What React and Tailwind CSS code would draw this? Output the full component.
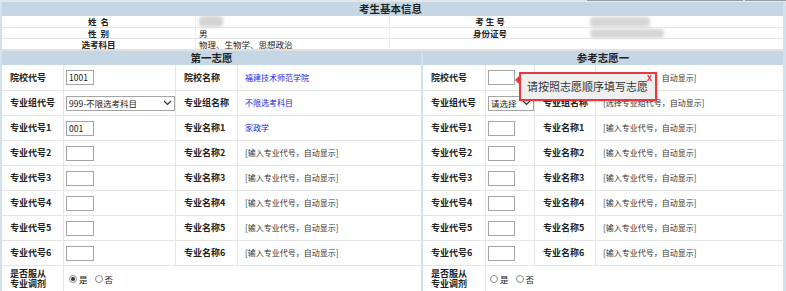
import React from 'react';

const font = { fontFamily: '"Noto Sans CJK SC", "Noto Sans", sans-serif' };

function Chevron() {
    return (
        <svg width="9" height="6" viewBox="0 0 9 6" className="shrink-0">
            <path d="M1 1 L4.5 4.5 L8 1" fill="none" stroke="#333" strokeWidth="1.2" />
        </svg>
    );
}

function Box({ value, wide }) {
    return (
        <div className={`h-[15px] border border-[#a5a5a5] bg-white text-[8.5px] leading-[13px] px-[2px] text-[#222] ${wide ? 'w-[28px]' : 'w-[27px]'}`}>
            {value}
        </div>
    );
}

function Radio({ checked, label }) {
    return (
        <span className="flex items-center gap-[2px]">
            <span className="w-[8px] h-[8px] rounded-full border border-[#8a8a8a] bg-white flex items-center justify-center">
                {checked && <span className="w-[4px] h-[4px] rounded-full bg-[#333]"></span>}
            </span>
            <span className="text-[8.5px] text-[#222]">{label}</span>
        </span>
    );
}

const rowCls = 'h-[25px] border-b border-[#e4e4e4] flex items-center';

function Panel({ title, cols, first, padL, selW }) {
    const rows = [
        { l: '专业代号1', n: '专业名称1' },
        { l: '专业代号2', n: '专业名称2' },
        { l: '专业代号3', n: '专业名称3' },
        { l: '专业代号4', n: '专业名称4' },
        { l: '专业代号5', n: '专业名称5' },
        { l: '专业代号6', n: '专业名称6' },
    ];
    const label = `${rowCls} border-r border-r-[#e4e4e4] ${padL} text-[9px] font-bold text-[#222] whitespace-nowrap`;
    const inputCell = `${rowCls} border-r border-r-[#e4e4e4] pl-[2px]`;
    const valueCell = `${rowCls} pl-[7px] text-[8px] whitespace-nowrap`;
    const hint = '[输入专业代号，自动显示]';
    return (
        <div className="flex flex-col">
            <div className="h-[14px] bg-[#c5d7e5] text-center text-[10.5px] font-bold leading-[14px] text-[#222]">{title}</div>
            <div className={`grid ${cols}`}>
                <div className={label + ' h-[26px]'}>院校代号</div>
                <div className={inputCell + ' h-[26px]'}><Box value={first ? '1001' : ''} wide={first} /></div>
                <div className={label + ' h-[26px]'}>院校名称</div>
                <div className={valueCell + ' h-[26px]'}>
                    {first ? <span className="text-[#2323e6]">福建技术师范学院</span> : <span className="text-[#333]">[输入院校代号，自动显示]</span>}
                </div>

                <div className={label}>专业组代号</div>
                <div className={inputCell}>
                    <div className={`h-[15px] ${selW} border border-[#a5a5a5] bg-white flex items-center justify-between pl-[2px] pr-[2px] text-[8.5px] text-[#222] whitespace-nowrap`}>
                        <span>{first ? '999-不限选考科目' : '请选择'}</span>
                        <Chevron />
                    </div>
                </div>
                <div className={label}>专业组名称</div>
                <div className={valueCell}>
                    {first ? <span className="text-[#2323e6]">不限选考科目</span> : <span className="text-[#333]">[选择专业组代号，自动显示]</span>}
                </div>

                {rows.map((r, i) => (
                    <React.Fragment key={r.l}>
                        <div className={label}>{r.l}</div>
                        <div className={inputCell}><Box value={first && i === 0 ? '001' : ''} wide={first} /></div>
                        <div className={label}>{r.n}</div>
                        <div className={valueCell}>
                            {first && i === 0 ? <span className="text-[#2323e6]">家政学</span> : <span className="text-[#333]">{hint}</span>}
                        </div>
                    </React.Fragment>
                ))}

                <div className={`h-[26px] flex flex-col justify-center border-r border-r-[#e4e4e4] ${padL} text-[9px] font-bold leading-[10px] text-[#222]`}>
                    <span>是否服从</span>
                    <span>专业调剂</span>
                </div>
                <div className={`h-[26px] col-span-3 flex items-center gap-[7px] ${first ? 'pl-[5px]' : 'pl-[4px]'}`}>
                    <Radio checked={first} label="是" />
                    <Radio checked={false} label="否" />
                </div>
            </div>
        </div>
    );
}

export default function App() {
    return (
        <div className="w-[786px] h-[291px] overflow-hidden bg-white" style={font}>
            <div className="h-[2px] flex bg-[#e6e6e6]">
                <div className="w-[587px]"></div>
                <div className="w-[156px] bg-[#9a9a9a] h-[1px]"></div>
                <div className="w-[2px]"></div>
                <div className="flex-1 bg-[#9a9a9a] h-[1px]"></div>
            </div>
            <div className="flex h-[289px]">
                <div className="w-[2px] bg-[#d3e1ec]"></div>
                <div className="flex-1 flex flex-col">
                    <div className="h-[14px] bg-[#c5d7e5] text-center text-[10.5px] font-bold leading-[14px] text-[#222] pr-[4px]">考生基本信息</div>
                    <div className="grid grid-cols-[194px_194px_200px_1fr] text-[8.5px] text-[#222]">
                        <div className="h-[12px] border-b border-[#e4e4e4] border-r border-r-[#eeeeee] text-center font-bold leading-[11px]">姓&nbsp;&nbsp;名</div>
                        <div className="h-[12px] border-b border-[#e4e4e4] border-r border-r-[#eeeeee] pl-[3px] flex items-center">
                            <span className="w-[24px] h-[11px] rounded-[4px] bg-[#d4d4d4] blur-[1.5px]"></span>
                        </div>
                        <div className="h-[12px] border-b border-[#e4e4e4] text-center font-bold leading-[11px]">考&nbsp;生&nbsp;号</div>
                        <div className="h-[12px] border-b border-[#e4e4e4] flex items-center">
                            <span className="w-[60px] h-[10px] rounded-[4px] bg-[#d6d6d6] blur-[1.5px]"></span>
                        </div>

                        <div className="h-[11px] border-b border-[#e4e4e4] border-r border-r-[#eeeeee] text-center font-bold leading-[10px]">性&nbsp;&nbsp;别</div>
                        <div className="h-[11px] border-b border-[#e4e4e4] border-r border-r-[#eeeeee] pl-[3px] leading-[10px]">男</div>
                        <div className="h-[11px] border-b border-[#e4e4e4] text-center font-bold leading-[10px]">身份证号</div>
                        <div className="h-[11px] border-b border-[#e4e4e4] flex items-center">
                            <span className="w-[74px] h-[9px] rounded-[4px] bg-[#d6d6d6] blur-[1.5px]"></span>
                        </div>

                        <div className="h-[12px] border-b-2 border-[#e0e0e0] border-r border-r-[#eeeeee] text-center font-bold leading-[11px]">选考科目</div>
                        <div className="h-[12px] border-b-2 border-[#e0e0e0] border-r border-r-[#eeeeee] pl-[3px] leading-[11px]">物理、生物学、思想政治</div>
                        <div className="h-[12px] border-b-2 border-[#e0e0e0]"></div>
                        <div className="h-[12px] border-b-2 border-[#e0e0e0]"></div>
                    </div>
                    <div className="flex flex-1">
                        <div className="w-[421px] border-r-2 border-[#d3e1ec]">
                            <Panel
                                title="第一志愿"
                                cols="grid-cols-[62px_112px_62px_1fr]"
                                first
                                padL="pl-[8px]"
                                selW="w-[110px]"
                            />
                        </div>
                        <div className="flex-1 relative">
                            <Panel
                                title="参考志愿一"
                                cols="grid-cols-[63px_49px_61px_1fr]"
                                first={false}
                                padL="pl-[8px]"
                                selW="w-[46px]"
                            />
                            <div className="absolute left-[96px] top-[21px] w-[138px] h-[29px] bg-[#efefef] border-2 border-[#e8383d] flex items-center pl-[6px] text-[11px] whitespace-nowrap text-[#333] shadow-[1px_1px_2px_rgba(0,0,0,0.15)]">
                                请按照志愿顺序填写志愿
                                <span className="absolute right-[3px] top-[-1px] text-[9px] font-bold text-[#e8383d] leading-none">x</span>
                                <span className="absolute left-[-6px] top-[2px] w-0 h-0 border-y-[4px] border-y-transparent border-r-[4px] border-r-[#e8383d]"></span>
                            </div>
                        </div>
                    </div>
                </div>
                <div className="w-[3px] bg-[#d3e1ec]"></div>
            </div>
        </div>
    );
}
